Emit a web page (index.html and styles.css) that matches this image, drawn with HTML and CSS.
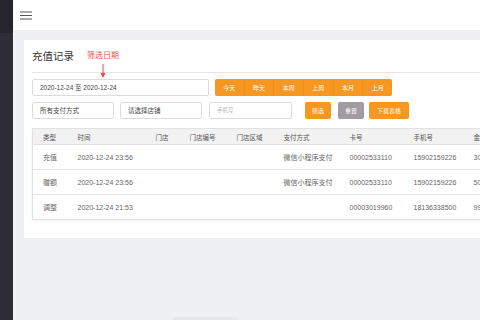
FILE: index.html
```html
<!DOCTYPE html>
<html lang="zh-CN">
<head>
  <meta charset="UTF-8">
  <title>充值记录</title>
  <link rel="stylesheet" href="styles.css">
</head>
<body>

<div class="app">
  <aside class="sidebar">
    <div class="sidebar-logo"></div>
  </aside>

  <div class="main">
    <header class="topbar">
      <svg class="menu-icon" width="12" height="9" viewBox="0 0 12 9">
        <path d="M0 1h12M0 4.5h12M0 8h12" stroke="#555" stroke-width="1.1" fill="none"/>
      </svg>
    </header>

    <div class="content">
      <section class="card">
        <div class="card-head">
          <h2>充值记录</h2>
          <!-- annotation over the date field -->
          <div class="annotation">
            <span>筛选日期</span>
            <svg width="6" height="14" viewBox="0 0 6 14">
              <path d="M3 0v10" stroke="#e54d4d" stroke-width="1"/>
              <path d="M0.5 9h5L3 14z" fill="#e54d4d"/>
            </svg>
          </div>
        </div>

        <div class="filters">
          <div class="filter-row">
            <div class="field date-range">2020-12-24 至 2020-12-24</div>
            <div class="btn-group">
              <button>今天</button>
              <button>昨天</button>
              <button>本周</button>
              <button>上周</button>
              <button>本月</button>
              <button>上月</button>
            </div>
          </div>
          <div class="filter-row">
            <div class="field select">所有支付方式</div>
            <div class="field select">请选择店铺</div>
            <div class="field placeholder">手机号</div>
            <button class="btn btn-orange btn-search">筛选</button>
            <button class="btn btn-gray">重置</button>
            <button class="btn btn-orange btn-wide">下载表格</button>
          </div>
        </div>

        <table class="records">
          <colgroup>
            <col style="width:35px">
            <col style="width:78px">
            <col style="width:34px">
            <col style="width:47px">
            <col style="width:47px">
            <col style="width:66px">
            <col style="width:64px">
            <col style="width:60px">
            <col style="width:60px">
          </colgroup>
          <thead>
            <tr>
              <th>类型</th><th>时间</th><th>门店</th><th>门店编号</th><th>门店区域</th>
              <th>支付方式</th><th>卡号</th><th>手机号</th><th>金额</th>
            </tr>
          </thead>
          <tbody>
            <tr>
              <td>充值</td><td>2020-12-24 23:56</td><td></td><td></td><td></td>
              <td>微信小程序支付</td><td>00002533110</td><td>15902159226</td><td>300</td>
            </tr>
            <tr>
              <td>赠额</td><td>2020-12-24 23:56</td><td></td><td></td><td></td>
              <td>微信小程序支付</td><td>00002533110</td><td>15902159226</td><td>50</td>
            </tr>
            <tr>
              <td>调整</td><td>2020-12-24 21:53</td><td></td><td></td><td></td>
              <td></td><td>00003019960</td><td>18136338500</td><td>99</td>
            </tr>
          </tbody>
        </table>
      </section>
    </div>
  </div>
</div>

<div class="scroll-hint"></div>

</body>
</html>
```

FILE: styles.css
```css
* { box-sizing: border-box; }

body {
  margin: 0;
  width: 480px;
  height: 320px;
  overflow: hidden;
  font-family: 'Liberation Sans', 'Noto Sans CJK SC', sans-serif;
  background: #eff0f4;
  color: #333;
  position: relative;
}

.app {
  display: flex;
  height: 320px;
}

.sidebar {
  width: 14px;
  flex: none;
  background: #2e2d37;
  border-right: 1px solid #f7f7f9;
}

.sidebar-logo {
  height: 33px;
  background: #26252d;
}

.main {
  flex: 1;
  display: flex;
  flex-direction: column;
  min-width: 0;
}

.topbar {
  height: 30px;
  background: #fff;
  display: flex;
  align-items: center;
  padding-left: 6px;
}

.content {
  padding: 10px 0 0 10px;
}

.card {
  width: 580px;
  background: #fff;
  padding: 0 8px 18px;
}

.card-head {
  position: relative;
  height: 33px;
  border-bottom: 1px solid #e6e6e6;
  display: flex;
  align-items: center;
}

.card-head h2 {
  margin: 0;
  font-size: 10.5px;
  font-weight: normal;
  color: #333;
  padding-bottom: 1px;
}

.annotation {
  position: absolute;
  left: 55px;
  top: 11px;
  display: flex;
  flex-direction: column;
  align-items: center;
  gap: 3px;
}

.annotation span {
  font-size: 8px;
  line-height: 10px;
  color: #e8524a;
}

.annotation svg {
  display: block;
}

.filters {
  padding-top: 6px;
  display: flex;
  flex-direction: column;
  gap: 6px;
}

.filter-row {
  display: flex;
  align-items: center;
  gap: 6px;
}

.field {
  height: 17px;
  border: 1px solid #dcdcdc;
  border-radius: 2px;
  font-size: 6.5px;
  line-height: 15px;
  padding: 0 7px;
  color: #444;
  white-space: nowrap;
}

.date-range {
  width: 177px;
}

.select {
  width: 82px;
}

.placeholder {
  width: 83px;
  color: #b5b5b5;
  font-size: 5.5px;
  margin-left: 1px;
}

.btn-group {
  display: flex;
  width: 177px;
  height: 17px;
  background: #f59720;
  border-radius: 2px;
  overflow: hidden;
}

.btn-group button {
  flex: 1;
  border: none;
  border-left: 1px solid #f0901a;
  background: none;
  color: #fff;
  font-family: inherit;
  font-size: 6px;
  padding: 0;
}

.btn-group button:first-child {
  border-left: none;
}

.btn {
  height: 17px;
  width: 26px;
  border: none;
  border-radius: 2px;
  color: #fff;
  font-family: inherit;
  font-size: 6px;
  padding: 0;
}

.btn-orange {
  background: #f59720;
}

.btn-gray {
  background: #a09ca1;
  margin-left: 1px;
}

.btn-search {
  margin-left: 7px;
}

.btn-wide {
  width: 40px;
  margin-left: -1px;
}

.records {
  margin-top: 9px;
  border-collapse: collapse;
  table-layout: fixed;
  width: 491px;
  font-size: 7px;
  color: #666;
  border: 1px solid #e2e2e2;
  box-shadow: 0 1px 2px rgba(0, 0, 0, 0.06);
}

.records th,
.records td {
  text-align: left;
  padding: 0 0 0 10px;
  white-space: nowrap;
  overflow: hidden;
}

.records th {
  height: 16px;
  background: #f2f2f2;
  font-weight: normal;
  font-size: 6.5px;
  color: #555;
  border-bottom: 1px solid #e2e2e2;
}

.records td {
  height: 25px;
  border-bottom: 1px solid #e6e6e6;
}

.scroll-hint {
  position: absolute;
  left: 173px;
  bottom: 0;
  width: 64px;
  height: 3px;
  border-radius: 3px 3px 0 0;
  background: #e8e8ec;
  box-shadow: 0 0 3px rgba(0, 0, 0, 0.04);
}
```
